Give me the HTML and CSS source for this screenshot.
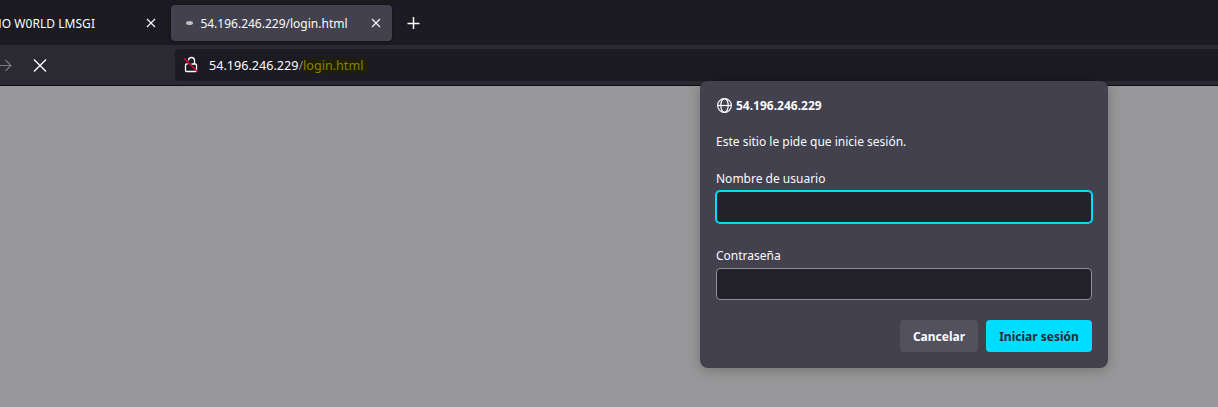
FILE: index.html
```html
<!DOCTYPE html>
<html lang="es">
<head>
<meta charset="utf-8">
<title>54.196.246.229/login.html</title>
<link rel="stylesheet" href="styles.css">
</head>
<body>
<div class="browser">
  <div class="tabs">
    <div class="tab tab-previous">
      <span class="tab-title">MO W0RLD LMSGI</span>
      <svg class="tab-close" viewBox="0 0 10 10"><path d="M1 1l8 8M9 1L1 9"/></svg>
    </div>
    <div class="tab tab-active">
      <span class="loading"></span>
      <span class="tab-title">54.196.246.229/login.html</span>
      <svg class="tab-close" viewBox="0 0 10 10"><path d="M1 1l8 8M9 1L1 9"/></svg>
    </div>
    <svg class="new-tab" viewBox="0 0 14 14"><path d="M6.5 1v12M.5 7.5h12"/></svg>
  </div>
  <div class="toolbar">
    <svg class="forward" viewBox="0 0 12 12"><path d="M0 6.5h11M5.5 1l5.5 5.5-5.5 5.5"/></svg>
    <svg class="stop" viewBox="0 0 14 14"><path d="M1 1.5l12 12M13 1.5L1 13.500"/></svg>
    <div class="urlbar">
      <svg class="lock" viewBox="0 0 16 18"><path class="lock-shape" d="M5.500 4.500C5.500 2.300 6.800 1.500 8.500 1.500s3 .8 3 3V8M8.500 8h3.800q1.200 0 1.200 1.200v5.100q0 1.200-1.200 1.200H3.700q-1.200 0-1.200-1.200V9.200q0-1.200 1.200-1.200h1"/><path class="lock-slash" d="M1.200 2.500L14.600 15.700"/></svg>
      <span class="url"><span class="host">54.196.246.229</span><span class="slash">/</span><span class="path">login.html</span></span>
    </div>
  </div>
  <div class="page"></div>
  <form class="dialog">
    <div class="origin">
      <svg class="globe" viewBox="0 0 16 16"><circle cx="8.500" cy="7.500" r="6.900"/><ellipse cx="8.500" cy="7.500" rx="3.700" ry="6.900"/><path d="M1.500 7.500h14"/></svg>
      <span>54.196.246.229</span>
    </div>
    <p class="message">Este sitio le pide que inicie sesión.</p>
    <label class="field-label" for="user">Nombre de usuario</label>
    <input class="field field-focused" id="user" type="text">
    <label class="field-label" for="password">Contraseña</label>
    <input class="field" id="password" type="password">
    <div class="actions">
      <button class="button cancel" type="button">Cancelar</button>
      <button class="button submit" type="button">Iniciar sesión</button>
    </div>
  </form>
</div>
</body>
</html>
```
FILE: styles.css
```css
* { box-sizing: border-box; }
body { margin: 0; overflow: hidden; font-family: "Noto Sans", sans-serif; font-size: 12px; color: #fbfbfe; }
svg { fill: none; stroke: #fbfbfe; stroke-width: 1.2; flex: none; }
.browser { position: relative; display: flex; flex-direction: column; width: 1218px; height: 407px; overflow: hidden; }
.tabs { display: flex; align-items: center; height: 45px; background: #1c1b22; }
.tab { display: flex; align-items: center; height: 36px; line-height: 18px; white-space: nowrap; margin-bottom: -1px; }
.tab-title { padding-top: 1px; }
.tab-previous { width: 171px; justify-content: space-between; padding-right: 15px; }
.tab-previous .tab-title { display: flex; justify-content: flex-end; width: 95px; letter-spacing: .04px; }
.tab-active { width: 221px; padding: 0 11px 0 15px; background: #42414d; border-radius: 4px; box-shadow: 0 0 4px rgba(0,0,0,.4); }
.loading { width: 7px; height: 4px; margin-right: 7.4px; border-radius: 50%; background: #bdbdc2; }
.tab-active .tab-title { flex: 1; }
.tab-close { width: 10px; height: 10px; stroke-width: 1.1; }
.new-tab { width: 14px; height: 14px; margin-left: 15px; stroke-width: 1.5; }
.toolbar { display: flex; align-items: center; height: 41px; background: #2b2a33; border-bottom: 1px solid #0c0c0d; }
.forward { width: 12px; height: 12px; stroke: #78777e; }
.stop { width: 14px; height: 14px; margin-left: 21px; stroke-width: 1.4; overflow: visible; }
.urlbar { display: flex; align-items: center; flex: 1; height: 32px; margin-left: 128px; padding-left: 8px; background: #1c1b22; border-radius: 4px 0 0 4px; }
.lock { width: 16px; height: 18px; }
.lock-shape { stroke-width: 1.3; }
.lock-slash { stroke: #e2003b; stroke-width: 1.4; }
.url { display: flex; align-items: center; margin: 2px 0 0 10px; font-size: 12.6px; line-height: 14px; }
.slash { color: #8f8e96; }
.path { color: #858300; background: #201e05; padding-right: 4px; }
.page { flex: 1; background: #98989a; }
.dialog { position: absolute; left: 700px; top: 81px; display: flex; flex-direction: column; width: 408px; height: 287px; padding: 16px; background: #42414d; border-radius: 8px; box-shadow: 0 2px 14px rgba(0,0,0,.25); line-height: 17px; }
.origin { display: flex; align-items: center; gap: 4px; height: 17px; font-weight: 700; }
.globe { width: 16px; height: 16px; }
.message { margin: 19px 0 20px; }
.field-label { height: 17px; }
.field { flex: none; width: 376px; height: 32px; margin: 4px 0 19px; padding: 0 8px; border: 1px solid #8f8f9d; border-radius: 4px; outline: none; background: #23222b; color: #fbfbfe; font: inherit; }
.field-focused { margin-bottom: 24px; border-color: #00ddff; box-shadow: 0 0 0 1px #00ddff; }
.actions { display: flex; justify-content: flex-end; gap: 8px; margin-top: 1px; }
.button { height: 32px; border: 0; border-radius: 4px; padding: 0; font: inherit; font-weight: 700; }
.cancel { width: 78px; background: #52515d; color: #fbfbfe; }
.submit { width: 106px; background: #00ddff; color: #2b2a33; }
```
